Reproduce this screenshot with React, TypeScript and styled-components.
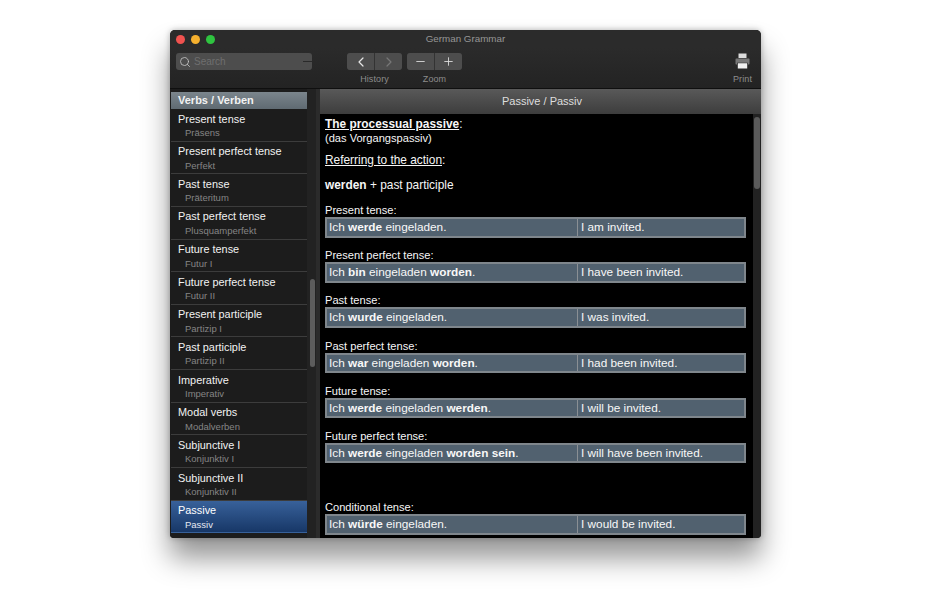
import styled, { createGlobalStyle } from "styled-components";
import { ChevronLeft, ChevronRight, Minus, Plus, Search } from "lucide-react";

const GlobalStyle = createGlobalStyle`
  html, body {
    margin: 0;
    padding: 0;
    background: #fff;
    font-family: "Liberation Sans", Arial, sans-serif;
  }
  body {
    width: 950px;
    height: 594px;
    overflow: hidden;
  }
`;

const topics = [
  ["Present tense", "Präsens"],
  ["Present perfect tense", "Perfekt"],
  ["Past tense", "Präteritum"],
  ["Past perfect tense", "Plusquamperfekt"],
  ["Future tense", "Futur I"],
  ["Future perfect tense", "Futur II"],
  ["Present participle", "Partizip I"],
  ["Past participle", "Partizip II"],
  ["Imperative", "Imperativ"],
  ["Modal verbs", "Modalverben"],
  ["Subjunctive I", "Konjunktiv I"],
  ["Subjunctive II", "Konjunktiv II"],
  ["Passive", "Passiv"],
];

const examples = [
  { label: "Present tense:", de: <>Ich <b>werde</b> eingeladen.</>, en: "I am invited." },
  { label: "Present perfect tense:", de: <>Ich <b>bin</b> eingeladen <b>worden</b>.</>, en: "I have been invited." },
  { label: "Past tense:", de: <>Ich <b>wurde</b> eingeladen.</>, en: "I was invited." },
  { label: "Past perfect tense:", de: <>Ich <b>war</b> eingeladen <b>worden</b>.</>, en: "I had been invited." },
  { label: "Future tense:", de: <>Ich <b>werde</b> eingeladen <b>werden</b>.</>, en: "I will be invited." },
  { label: "Future perfect tense:", de: <>Ich <b>werde</b> eingeladen <b>worden sein</b>.</>, en: "I will have been invited." },
  { label: "Conditional tense:", de: <>Ich <b>würde</b> eingeladen.</>, en: "I would be invited.", far: true },
];

const PrinterIcon = () => (
  <svg width="15" height="16" viewBox="0 0 15 16">
    <path d="M3.5 .5h8v4.500h-8z" fill="#dcdcdc" />
    <path d="M1.2 5.500h12.600c.4 0 .7.3.7.7v4.600c0 .4-.3.7-.7.7h-.8V9.800H2v1.700h-.8c-.4 0-.7-.3-.7-.7V6.200c0-.4.3-.7.7-.7z" fill="#777" />
    <path d="M2.800 10.200h9.400v5.300H2.800z" fill="#f0f0f0" />
  </svg>
);

export default function App() {
  return (
    <Page>
      <GlobalStyle />
      <Window>
        <TitleBar>
          <Lights>
            <Light $color="#f0524f" />
            <Light $color="#f5b02e" />
            <Light $color="#2fc440" />
          </Lights>
          <WindowTitle>German Grammar</WindowTitle>
        </TitleBar>
        <Toolbar>
          <SearchField>
            <Search size={12} color="#c4c4c4" strokeWidth={1.7} />
            <SearchHint>Search</SearchHint>
            <SearchNotch />
          </SearchField>
          <ToolGroup $left={35}>
            <Segmented>
              <Segment><ChevronLeft size={16} color="#e6e6e6" strokeWidth={1.8} /></Segment>
              <Segment><ChevronRight size={16} color="#777" strokeWidth={1.8} /></Segment>
            </Segmented>
            <ToolLabel>History</ToolLabel>
          </ToolGroup>
          <ToolGroup $left={5}>
            <Segmented>
              <Segment><Minus size={13} color="#e0e0e0" strokeWidth={1.6} /></Segment>
              <Segment><Plus size={13} color="#e0e0e0" strokeWidth={1.6} /></Segment>
            </Segmented>
            <ToolLabel>Zoom</ToolLabel>
          </ToolGroup>
          <PrintGroup>
            <PrinterIcon />
            <ToolLabel>Print</ToolLabel>
          </PrintGroup>
        </Toolbar>
        <Body>
          <Sidebar>
            <TopicList>
              <GroupHeader>Verbs / Verben</GroupHeader>
              {topics.map(([en, de], i) => (
                <Topic key={en} $active={i === topics.length - 1}>
                  <TopicName>{en}</TopicName>
                  <TopicSub $active={i === topics.length - 1}>{de}</TopicSub>
                </Topic>
              ))}
            </TopicList>
            <SideTrack>
              <SideThumb />
            </SideTrack>
          </Sidebar>
          <Main>
            <MainHeader>Passive / Passiv</MainHeader>
            <MainScroll>
              <Article>
                <Heading><u><b>The processual passive</b></u>:</Heading>
                <Line>(das Vorgangspassiv)</Line>
                <SubHeading><u>Referring to the action</u>:</SubHeading>
                <Formula><b>werden</b> + past participle</Formula>
                {examples.map((ex) => (
                  <Example key={ex.label} $far={ex.far}>
                    <Line>{ex.label}</Line>
                    <Sentence>
                      <Cell $w={250}>{ex.de}</Cell>
                      <Cell $w={171}>{ex.en}</Cell>
                    </Sentence>
                  </Example>
                ))}
              </Article>
              <MainTrack>
                <MainThumb />
              </MainTrack>
            </MainScroll>
          </Main>
        </Body>
      </Window>
    </Page>
  );
}

const Page = styled.div`
  width: 950px;
  height: 594px;
  padding: 30px 0 0 170px;
  box-sizing: border-box;
  background: #fff;
`;

const Window = styled.div`
  width: 591px;
  height: 508px;
  display: flex;
  flex-direction: column;
  overflow: hidden;
  border-radius: 5px 5px 4px 4px;
  background: #1e1e1e;
  box-shadow: 0 20px 28px rgba(0, 0, 0, 0.42), 0 0 6px rgba(0, 0, 0, 0.28);
`;

const TitleBar = styled.div`
  height: 18px;
  flex: none;
  display: flex;
  align-items: center;
  position: relative;
  background: #2b2b2b;
`;

const Lights = styled.div`
  display: flex;
  gap: 6px;
  padding-left: 5.5px;
`;

const Light = styled.span<{ $color: string }>`
  width: 9px;
  height: 9px;
  border-radius: 50%;
  background: ${(p) => p.$color};
`;

const WindowTitle = styled.div`
  position: absolute;
  left: 0;
  right: 0;
  top: 2px;
  text-align: center;
  font-size: 9.8px;
  line-height: 14px;
  color: #969696;
`;

const Toolbar = styled.div`
  height: 41px;
  flex: none;
  display: flex;
  align-items: flex-start;
  padding: 5px 9px 0 6px;
  box-sizing: border-box;
  background: linear-gradient(#2b2b2b, #232323);
  border-bottom: 1px solid #0f0f0f;
`;

const SearchField = styled.div`
  width: 136px;
  height: 17px;
  display: flex;
  align-items: center;
  gap: 3px;
  padding-left: 3px;
  box-sizing: border-box;
  position: relative;
  border-radius: 3px;
  background: #4d4d4d;
`;

const SearchHint = styled.span`
  font-size: 10px;
  color: #6f6f6f;
`;

const SearchNotch = styled.span`
  position: absolute;
  right: 0;
  top: 8px;
  width: 9px;
  height: 1px;
  background: #2a2a2a;
`;

const ToolGroup = styled.div<{ $left: number }>`
  margin-left: ${(p) => p.$left}px;
  display: flex;
  flex-direction: column;
  align-items: center;
  gap: 4px;
`;

const Segmented = styled.div`
  display: flex;
  gap: 1px;
  border-radius: 3px;
  overflow: hidden;
  background: #333;
`;

const Segment = styled.div`
  width: 27px;
  height: 17px;
  display: flex;
  align-items: center;
  justify-content: center;
  background: #4d4d4d;
`;

const ToolLabel = styled.div`
  font-size: 9px;
  line-height: 11px;
  letter-spacing: 0.1px;
  color: #8c8c8c;
`;

const PrintGroup = styled.div`
  margin-left: auto;
  display: flex;
  flex-direction: column;
  align-items: center;
  gap: 5px;
`;

const Body = styled.div`
  flex: 1;
  min-height: 0;
  display: flex;
`;

const Sidebar = styled.div`
  width: 146px;
  flex: none;
  display: flex;
  background: #1c1c1c;
`;

const TopicList = styled.div`
  width: 137px;
  flex: none;
  padding: 3px 0 0 1px;
  box-sizing: border-box;
  overflow: hidden;
`;

const GroupHeader = styled.div`
  height: 17px;
  padding-left: 7px;
  font-size: 11px;
  font-weight: 700;
  line-height: 17px;
  color: #f2f2f2;
  background: linear-gradient(#7b858c, #5f6a72);
`;

const Topic = styled.div<{ $active?: boolean }>`
  height: 32.65px;
  box-sizing: border-box;
  padding: 2.5px 0 0 7px;
  border-bottom: 1px solid ${(p) => (p.$active ? "transparent" : "#3c3c3c")};
  background: ${(p) => (p.$active ? "linear-gradient(#38619a, #173767)" : "#1c1c1c")};
  color: ${(p) => (p.$active ? "#fff" : "#f2f2f2")};
`;

const TopicName = styled.div`
  font-size: 10.9px;
  line-height: 14.5px;
`;

const TopicSub = styled.div<{ $active?: boolean }>`
  padding-left: 7px;
  font-size: 9.5px;
  line-height: 13px;
  color: ${(p) => (p.$active ? "#e4e9f2" : "#858585")};
`;

const SideTrack = styled.div`
  flex: 1;
  padding: 190px 1px 0 3px;
  box-sizing: border-box;
  background: #222;
`;

const SideThumb = styled.div`
  width: 5px;
  height: 88px;
  border-radius: 3px;
  background: #5c5c5c;
`;

const Main = styled.div`
  flex: 1;
  min-width: 0;
  display: flex;
  flex-direction: column;
  border-left: 4px solid #2b2b2b;
`;

const MainHeader = styled.div`
  height: 25px;
  flex: none;
  padding-left: 3px;
  text-align: center;
  font-size: 11px;
  line-height: 25px;
  color: #dedede;
  background: linear-gradient(#595959, #3d3d3d);
`;

const MainScroll = styled.div`
  flex: 1;
  min-height: 0;
  display: flex;
`;

const Article = styled.div`
  width: 433px;
  flex: none;
  padding: 3.5px 0 0 5px;
  box-sizing: border-box;
  overflow: hidden;
  background: #000;
  color: #f6f6f6;
`;

const Line = styled.div`
  font-size: 11.1px;
  line-height: 14px;
`;

const Heading = styled.div`
  font-size: 11.9px;
  line-height: 13px;
`;

const SubHeading = styled.div`
  margin-top: 8.5px;
  font-size: 11.9px;
  line-height: 15px;
`;

const Formula = styled.div`
  margin-top: 10px;
  font-size: 11.9px;
  line-height: 15px;
`;

const Example = styled.div<{ $far?: boolean }>`
  margin-top: ${(p) => (p.$far ? "36.8px" : "10.7px")};

  ${Formula} + & {
    margin-top: 10px;
  }
`;

const Sentence = styled.div`
  display: flex;
  width: 421px;
  height: 20.5px;
  box-sizing: border-box;
  border: 2px solid #7f868c;
  background: #51616f;
`;

const Cell = styled.div<{ $w: number }>`
  width: ${(p) => p.$w}px;
  box-sizing: border-box;
  padding-left: 2px;
  font-size: 11.8px;
  line-height: 16.5px;
  white-space: nowrap;
  color: #f8f8f8;

  & + & {
    flex: 1;
    border-left: 1px solid #8a8f94;
    padding-left: 3px;
  }
`;

const MainTrack = styled.div`
  flex: 1;
  padding: 3px 1px 0 1px;
  box-sizing: border-box;
  background: #222;
`;

const MainThumb = styled.div`
  width: 6px;
  height: 72px;
  border-radius: 3px;
  background: #5a5a5a;
`;
